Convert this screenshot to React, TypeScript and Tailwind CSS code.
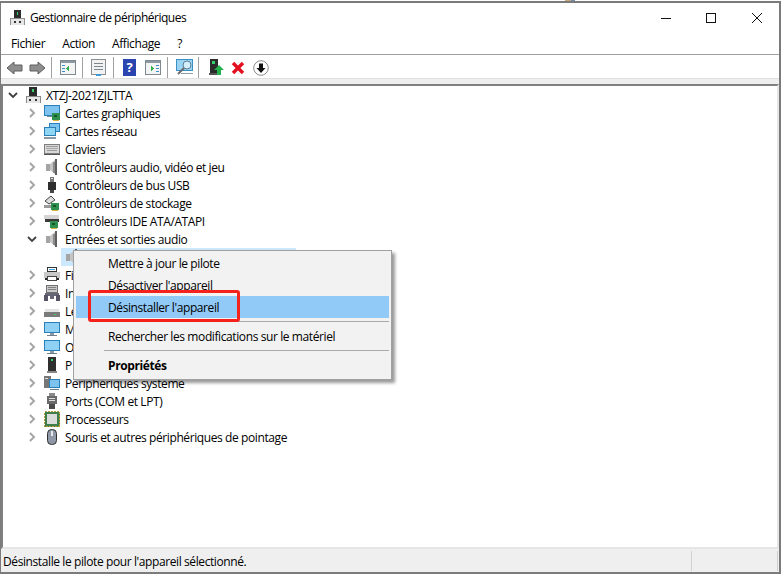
import type { ReactNode } from "react";

const FONT = "font-['Open_Sans','Noto_Sans',sans-serif]";

function Svg({ w = 16, h = 16, className, children }: { w?: number; h?: number; className?: string; children: ReactNode }) {
  return (
    <svg width={w} height={h} viewBox={`0 0 ${w} ${h}`} className={className} shapeRendering="crispEdges">
      {children}
    </svg>
  );
}

// device manager computer: dark tower on a pale base
function HostIcon({ size = 16 }: { size?: number }) {
  return (
    <svg width={size} height={size} viewBox="0 0 16 16" shapeRendering="crispEdges">
      <rect x="4" y="0" width="8" height="10" fill="#2b2b2b" />
      <rect x="7" y="2" width="2" height="3" fill="#35d06a" />
      <rect x="1" y="9" width="14" height="7" fill="#e6e6e6" stroke="#8a8a8a" />
      <rect x="4" y="12" width="2" height="2" fill="#333" />
      <rect x="10" y="12" width="2" height="2" fill="#333" />
    </svg>
  );
}

function Chip({ x, y }: { x: number; y: number }) {
  return (
    <g>
      <rect x={x} y={y} width="8" height="7" fill="#2f8f4e" />
      <rect x={x + 2} y={y + 2} width="3" height="2" fill="#14552c" />
      <rect x={x + 1} y={y + 7} width="6" height="1" fill="#d9b13b" />
    </g>
  );
}

function Monitor() {
  return (
    <g>
      <rect x="0.5" y="1.5" width="15" height="10" fill="#8fd0f5" stroke="#2a7fb8" />
      <rect x="6" y="12" width="4" height="2" fill="#8a9aa6" />
      <rect x="3" y="14" width="10" height="1" fill="#6f7f8a" />
    </g>
  );
}

const DEVICE_ICONS: Record<string, ReactNode> = {
  gpu: (
    <>
      <rect x="0.5" y="0.5" width="15" height="10" fill="#7cc4ef" stroke="#2a7fb8" />
      <rect x="3" y="11" width="8" height="1" fill="#7a8a96" />
      <Chip x={8} y={8} />
    </>
  ),
  net: (
    <>
      <rect x="5.5" y="0.5" width="10" height="8" fill="#7cc4ef" stroke="#2a7fb8" />
      <rect x="0.5" y="4.5" width="11" height="8" fill="#8fd6f5" stroke="#2a7fb8" />
      <rect x="0" y="14" width="12" height="2" fill="#8a9aa6" />
    </>
  ),
  keyboard: (
    <>
      <rect x="0.5" y="3.5" width="15" height="9" fill="#d8d8d8" stroke="#7e7e7e" />
      <rect x="2" y="5" width="12" height="1" fill="#9a9a9a" />
      <rect x="2" y="7" width="12" height="1" fill="#a8a8a8" />
      <rect x="3" y="9" width="10" height="1" fill="#9a9a9a" />
      <rect x="0" y="13" width="16" height="1" fill="#555" />
    </>
  ),
  speaker: (
    <>
      <rect x="2" y="5" width="4" height="7" fill="#a4a4a4" />
      <path d="M6 5 L12 0 V16 L6 11 Z" fill="#c4c4c4" shapeRendering="auto" />
      <rect x="9" y="3" width="2" height="11" fill="#8c8c8c" />
      <rect x="11" y="0" width="2" height="16" fill="#5f5f5f" />
    </>
  ),
  usb: (
    <>
      <rect x="6" y="0" width="4" height="5" fill="#777" />
      <rect x="7" y="1" width="2" height="1" fill="#ddd" />
      <rect x="4" y="5" width="8" height="8" fill="#2f2f2f" />
      <rect x="6" y="13" width="4" height="3" fill="#454545" />
    </>
  ),
  storage: (
    <>
      <path d="M1 6 L7 1 L11 5 L5 9 Z" fill="#ddd" stroke="#444" shapeRendering="auto" />
      <rect x="0" y="10" width="7" height="3" fill="#9a9a9a" />
      <Chip x={7} y={8} />
    </>
  ),
  ide: (
    <>
      <rect x="0" y="2" width="15" height="4" fill="#d5d5d5" />
      <rect x="1" y="6" width="14" height="3" fill="#3a3a3a" />
      <Chip x={6} y={8} />
    </>
  ),
  printer: (
    <>
      <rect x="3.5" y="0.5" width="9" height="4" fill="#fff" stroke="#333" />
      <rect x="5" y="2" width="6" height="1" fill="#3fa5e0" />
      <rect x="0" y="5" width="16" height="6" fill="#c8c8c8" />
      <rect x="1" y="11" width="14" height="2" fill="#222" />
      <rect x="3.5" y="9.5" width="9" height="4" fill="#fff" stroke="#444" />
    </>
  ),
  hid: (
    <>
      <rect x="2.5" y="0.5" width="11" height="7" fill="#c9c9c9" stroke="#6f6f6f" />
      <rect x="4" y="2" width="8" height="1" fill="#808080" />
      <rect x="4" y="4" width="8" height="1" fill="#808080" />
      <rect x="1" y="8" width="14" height="3" fill="#667" />
      <rect x="0" y="10" width="4" height="6" fill="#556" />
      <rect x="12" y="10" width="4" height="6" fill="#556" />
      <rect x="6" y="11" width="4" height="3" fill="#667" />
    </>
  ),
  disk: (
    <>
      <rect x="1" y="6" width="14" height="3" fill="#e2e2e2" />
      <rect x="0" y="9" width="16" height="5" fill="#7a7a7a" />
      <rect x="10" y="11" width="2" height="1" fill="#3fd06a" />
    </>
  ),
  monitor: <Monitor />,
  tower: (
    <>
      <rect x="4" y="0" width="8" height="14" fill="#2f2f2f" />
      <rect x="7" y="2" width="2" height="2" fill="#35d06a" />
      <rect x="3" y="14" width="10" height="2" fill="#888" />
    </>
  ),
  system: (
    <>
      <rect x="0" y="1" width="7" height="12" fill="#777" />
      <rect x="1" y="3" width="3" height="1" fill="#ddd" />
      <rect x="5.5" y="4.5" width="10" height="8" fill="#7cc4ef" stroke="#2a7fb8" />
      <rect x="6" y="14" width="9" height="1" fill="#6f7f8a" />
    </>
  ),
  ports: (
    <>
      <rect x="5" y="0" width="6" height="3" fill="#8a8a8a" />
      <rect x="3" y="3" width="10" height="8" fill="#6a6a6a" />
      <rect x="5" y="5" width="6" height="1" fill="#ddd" />
      <rect x="5" y="7" width="6" height="1" fill="#ddd" />
      <rect x="5" y="11" width="6" height="5" fill="#4a4a4a" />
    </>
  ),
  cpu: (
    <>
      <rect x="0.5" y="0.5" width="15" height="15" fill="#3f7d4a" stroke="#b99b3a" strokeDasharray="2 1" />
      <rect x="3" y="3" width="10" height="10" fill="#d9dcd9" />
    </>
  ),
  mouse: (
    <>
      <rect x="3.5" y="0.5" width="9" height="15" rx="4" fill="#8e98a6" stroke="#2f2f2f" shapeRendering="auto" />
      <rect x="7" y="2" width="2" height="5" fill="#e5e8ec" />
    </>
  ),
};

// labels under the context menu only show their first letters
const ROWS = [
  { icon: "gpu", label: "Cartes graphiques" },
  { icon: "net", label: "Cartes réseau" },
  { icon: "keyboard", label: "Claviers" },
  { icon: "speaker", label: "Contrôleurs audio, vidéo et jeu" },
  { icon: "usb", label: "Contrôleurs de bus USB" },
  { icon: "storage", label: "Contrôleurs de stockage" },
  { icon: "ide", label: "Contrôleurs IDE ATA/ATAPI" },
  { icon: "speaker", label: "Entrées et sorties audio", open: true },
  { icon: "speaker", label: "", selected: true },
  { icon: "printer", label: "Fi" },
  { icon: "hid", label: "In" },
  { icon: "disk", label: "Le" },
  { icon: "monitor", label: "M" },
  { icon: "monitor", label: "O" },
  { icon: "tower", label: "P" },
  { icon: "system", label: "Périphériques système" },
  { icon: "ports", label: "Ports (COM et LPT)" },
  { icon: "cpu", label: "Processeurs" },
  { icon: "mouse", label: "Souris et autres périphériques de pointage" },
];

function Chevron({ open }: { open?: boolean }) {
  return (
    <svg width="10" height="10" viewBox="0 0 10 10" fill="none">
      {open ? (
        <path d="M1 3 L5 7 L9 3" stroke="#404040" strokeWidth="1.8" />
      ) : (
        <path d="M3 1 L7 5 L3 9" stroke="#a6a6a6" strokeWidth="2" />
      )}
    </svg>
  );
}

function TreeRow({ icon, label, open, selected }: { icon: string; label: string; open?: boolean; selected?: boolean }) {
  if (selected) {
    return (
      <div className="flex h-[18px] items-center pl-[58px]">
        <div className="flex h-[18px] w-[235px] items-center bg-[#cce8ff] pl-[3px]">
          <Svg>{DEVICE_ICONS[icon]}</Svg>
        </div>
      </div>
    );
  }
  return (
    <div className="flex h-[18px] items-center pl-[24px]">
      <span className="flex w-[17px] items-center">
        <Chevron open={open} />
      </span>
      <Svg>{DEVICE_ICONS[icon]}</Svg>
      <span className="ml-[5px] pt-[2px]">{label}</span>
    </div>
  );
}

function ToolSep({ className }: { className: string }) {
  return <span className={`h-[22px] w-px bg-[#a0a0a0] ${className}`} />;
}

function ArrowIcon({ flip }: { flip?: boolean }) {
  return (
    <svg width="17" height="14" viewBox="0 0 17 14" className={flip ? "-scale-x-100" : ""}>
      <path d="M1 7 L8 1 V4 H16 V10 H8 V13 Z" fill="#8e8e8e" stroke="#5e5e5e" />
    </svg>
  );
}

function PaneIcon({ mark, left }: { mark: string; left?: boolean }) {
  return (
    <Svg w={16} h={15}>
      <rect x="0.5" y="0.5" width="15" height="14" fill="#f4f4f4" stroke="#7f8a90" />
      <rect x="1" y="1" width="14" height="2" fill="#8d9aa3" />
      {left ? (
        <path d="M9 6 L6 8.5 L9 11 Z" fill={mark} />
      ) : (
        <path d="M6 6 L9 8.5 L6 11 Z" fill={mark} />
      )}
      <rect x={left ? 2 : 11} y="5" width="3" height="1" fill="#3d8fc9" />
      <rect x={left ? 2 : 11} y="8" width="3" height="1" fill="#3d8fc9" />
      <rect x={left ? 2 : 11} y="11" width="3" height="1" fill="#3d8fc9" />
    </Svg>
  );
}

function Toolbar() {
  return (
    <div className="flex h-[23px] items-center bg-white pl-[5px] pt-[2px]">
      <ArrowIcon />
      <span className="ml-[6px] flex">
        <ArrowIcon flip />
      </span>
      <ToolSep className="ml-[5px]" />
      <span className="ml-[8px] flex">
        <PaneIcon mark="#2fb04a" left />
      </span>
      <ToolSep className="ml-[6px]" />
      <span className="ml-[8px] flex">
        <Svg w={15} h={17}>
          <rect x="0.5" y="0.5" width="14" height="15" fill="#f2f2f2" stroke="#8a8f94" />
          <rect x="3" y="4" width="9" height="1" fill="#7d8790" />
          <rect x="3" y="7" width="9" height="1" fill="#7d8790" />
          <rect x="3" y="10" width="9" height="1" fill="#7d8790" />
          <rect x="5" y="15" width="5" height="2" fill="#3d9ad9" />
        </Svg>
      </span>
      <ToolSep className="ml-[7px]" />
      <span className="ml-[9px] flex h-[17px] w-[13px] items-center justify-center bg-[#2a44b0] text-[13px] font-bold leading-none text-white">
        ?
      </span>
      <span className="ml-[9px] flex">
        <PaneIcon mark="#2fb04a" />
      </span>
      <ToolSep className="ml-[6px]" />
      <span className="ml-[8px] flex">
        <svg width="18" height="17" viewBox="0 0 18 17">
          <rect x="0.5" y="0.5" width="16" height="11" fill="#9ad4f5" stroke="#3a8fc4" />
          <rect x="5" y="14" width="12" height="1" fill="#8aa0ad" />
          <circle cx="11" cy="6" r="4" fill="#d4eefb" stroke="#5c7f94" />
          <path d="M8 9 L2 15" stroke="#6a6a6a" strokeWidth="2" />
        </svg>
      </span>
      <ToolSep className="ml-[4px]" />
      <span className="ml-[10px] flex">
        <Svg w={15} h={17}>
          <rect x="1" y="0" width="8" height="14" fill="#2b2b2b" />
          <rect x="3" y="2" width="3" height="3" fill="#35d06a" />
          <rect x="0" y="14" width="9" height="2" fill="#555" />
          <path d="M10 6 L15 11 H12 V16 H8 V11 H5 Z" fill="#22b14c" shapeRendering="auto" />
        </Svg>
      </span>
      <span className="ml-[7px] flex">
        <svg width="14" height="14" viewBox="0 0 14 14">
          <path d="M2 2 L12 12 M12 2 L2 12" stroke="#e3101f" strokeWidth="3.4" />
        </svg>
      </span>
      <span className="ml-[8px] flex">
        <svg width="16" height="16" viewBox="0 0 16 16">
          <circle cx="8" cy="8" r="7.3" fill="#fff" stroke="#8a8a8a" />
          <path d="M6 3.5 H10 V8 H12.5 L8 13 L3.5 8 H6 Z" fill="#111" />
        </svg>
      </span>
    </div>
  );
}

function MenuItem({ children, active, bold }: { children: ReactNode; active?: boolean; bold?: boolean }) {
  return (
    <div className={`flex h-[22px] items-center pl-[32px] pt-[2px] ${active ? "bg-[#91c9f7]" : ""} ${bold ? "font-bold" : ""}`}>
      {children}
    </div>
  );
}

function MenuSep() {
  return (
    <div className="flex h-[7px] items-center pl-[28px]">
      <div className="h-px w-full bg-[#a9a9a9]" />
    </div>
  );
}

function ContextMenu() {
  return (
    <div className="absolute left-[73px] top-[250px] h-[130px] w-[319px] border border-[#a0a0a0] bg-[#f2f2f2] px-[2px] py-px shadow-[3px_3px_3px_rgba(0,0,0,0.4)]">
      <MenuItem>Mettre à jour le pilote</MenuItem>
      <MenuItem>Désactiver l'appareil</MenuItem>
      <MenuItem active>Désinstaller l'appareil</MenuItem>
      <MenuSep />
      <MenuItem>Rechercher les modifications sur le matériel</MenuItem>
      <MenuSep />
      <MenuItem bold>Propriétés</MenuItem>
    </div>
  );
}

export default function App() {
  return (
    <div className={`relative h-[574px] w-[782px] overflow-hidden bg-white text-[12px] tracking-[-0.4px] text-black ${FONT}`}>
      <div className="h-px bg-[repeating-linear-gradient(90deg,#fff_0_565px,#c9a77c_565px_571px,#6f8fb0_571px_575px,#fff_575px_579px)]" />
      <div className="flex h-[573px] w-[781px] flex-col border-2 border-l-[1px] border-[#7b7b7b] bg-white">
        {/* title bar */}
        <div className="flex h-[30px] items-center pb-px pl-[9px]">
          <HostIcon size={15} />
          <span className="ml-[5px] tracking-[-0.5px]">Gestionnaire de périphériques</span>
          <div className="ml-auto flex items-center">
            <svg width="10" height="10" viewBox="0 0 10 10" className="mr-[35px]" shapeRendering="crispEdges">
              <rect x="0" y="5" width="10" height="1" fill="#111" />
            </svg>
            <svg width="10" height="10" viewBox="0 0 10 10" className="mr-[36px]" shapeRendering="crispEdges">
              <rect x="0.5" y="0.5" width="9" height="9" fill="none" stroke="#111" />
            </svg>
            <svg width="10" height="10" viewBox="0 0 10 10" className="mr-[17px]">
              <path d="M0 0 L10 10 M10 0 L0 10" stroke="#111" strokeWidth="1" />
            </svg>
          </div>
        </div>
        {/* menu bar */}
        <div className="flex h-[22px] items-center gap-[17px] border-b border-[#a0a0a0] pl-[10px]">
          <span>Fichier</span>
          <span>Action</span>
          <span>Affichage</span>
          <span>?</span>
        </div>
        <Toolbar />
        <div className="h-[6px] border-t border-[#e0e0e0] bg-[#efefef]" />
        {/* device tree */}
        <div className="min-h-0 flex-1 border-2 border-b-[#e6e6e6] border-l-[#808080] border-r-[#e6e6e6] border-t-[#808080]">
          <div className="flex h-[18px] items-center pl-[5px]">
            <span className="flex w-[17px] items-center">
              <Chevron open />
            </span>
            <HostIcon />
            <span className="ml-[5px] pt-[2px]">XTZJ-2021ZJLTTA</span>
          </div>
          {ROWS.map((r) => (
            <TreeRow key={r.icon + r.label} icon={r.icon} label={r.label} open={r.open} selected={r.selected} />
          ))}
        </div>
        {/* status bar */}
        <div className="flex h-[23px] items-center bg-[#efefef] pl-[2px]">
          <span className="pt-[2px]">Désinstalle le pilote pour l'appareil sélectionné.</span>
          <span className="ml-auto mr-[85px] h-[20px] w-px bg-[#d0d0d0]" />
          <span className="mr-[1px] h-[20px] w-px bg-[#d0d0d0]" />
        </div>
      </div>
      <ContextMenu />
      {/* red annotation box from the screenshot */}
      <div className="absolute left-[88px] top-[290px] h-[32px] w-[152px] rounded-[3px] border-[3px] border-[#f5211b]" />
    </div>
  );
}
